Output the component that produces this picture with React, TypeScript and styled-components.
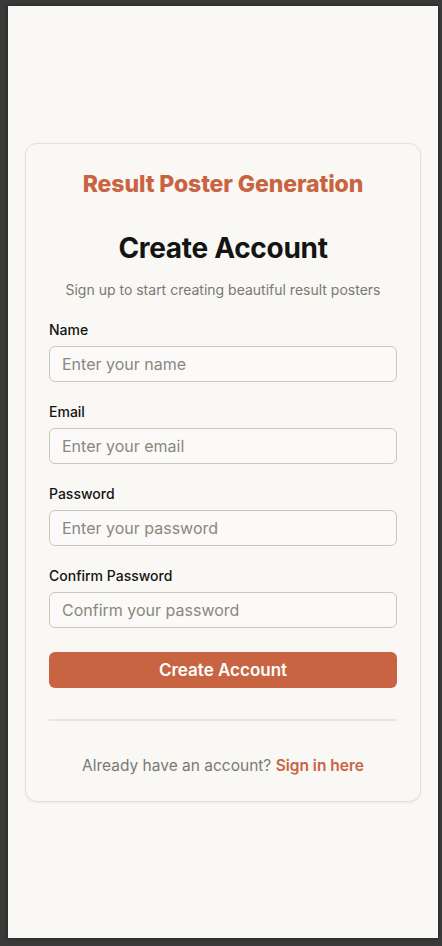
import React from 'react';
import styled, { createGlobalStyle } from 'styled-components';

const GlobalStyle = createGlobalStyle`
    * {
        box-sizing: border-box;
    }

    body {
        margin: 0;
        background: #3a3a3a;
        font-family: Inter, "Noto Sans", sans-serif;
        -webkit-font-smoothing: antialiased;
    }
`;

const fields = [
    { label: 'Name', type: 'text', placeholder: 'Enter your name' },
    { label: 'Email', type: 'email', placeholder: 'Enter your email' },
    { label: 'Password', type: 'password', placeholder: 'Enter your password' },
    { label: 'Confirm Password', type: 'password', placeholder: 'Confirm your password' },
];

export default function App() {
    return (
        <>
            <GlobalStyle />
            <Page>
                <Card>
                    <Brand>Result Poster Generation</Brand>

                    <Heading>Create Account</Heading>

                    <Subtitle>Sign up to start creating beautiful result posters</Subtitle>

                    <Form noValidate autoComplete="off" onSubmit={e => e.preventDefault()}>
                        {fields.map(f => (
                            <Field key={f.label}>
                                <Label>{f.label}</Label>
                                <Input type={f.type} placeholder={f.placeholder} />
                            </Field>
                        ))}

                        <Btn type="submit">Create Account</Btn>
                    </Form>

                    <Divider />

                    <Footer>
                        Already have an account? <FooterLink href="#">Sign in here</FooterLink>
                    </Footer>
                </Card>
            </Page>
        </>
    );
}

const Page = styled.div`
    margin: 6px 4px 8px 8px;
    width: 430px;
    height: 932px;
    background: #f9f8f5;
    box-shadow: 0 0 4px rgba(0, 0, 0, 0.45);
    display: flex;
    align-items: center;
    justify-content: center;
`;

const Card = styled.div`
    width: 396px;
    padding: 26px 23px 23px;
    border: 1px solid #e3e1dc;
    border-radius: 12px;
    background: #f9f8f5;
    box-shadow: 0 1px 3px rgba(0, 0, 0, 0.06);
    display: flex;
    flex-direction: column;
`;

const Brand = styled.h2`
    margin: 0;
    font-size: 23px;
    line-height: 28px;
    font-weight: 800;
    color: #c96442;
    text-align: center;
    letter-spacing: -0.1px;
`;

const Heading = styled.h1`
    margin: 32px 0 0;
    font-size: 28px;
    line-height: 36px;
    font-weight: 700;
    color: #141413;
    text-align: center;
    letter-spacing: -0.3px;
`;

const Subtitle = styled.p`
    margin: 14px 0 20px;
    font-size: 14px;
    line-height: 20px;
    color: #7a7872;
    text-align: center;
`;

const Form = styled.form`
    display: flex;
    flex-direction: column;
    gap: 20px;
`;

const Field = styled.div`
    display: flex;
    flex-direction: column;
    gap: 6px;
`;

const Label = styled.label`
    font-size: 14px;
    line-height: 20px;
    font-weight: 500;
    color: #141413;
`;

const Input = styled.input`
    height: 36px;
    padding: 0 12px;
    border: 1px solid #c9c6be;
    border-radius: 6px;
    background: #fbfaf8;
    font-family: inherit;
    font-size: 16px;
    color: #141413;
    outline: none;

    &::placeholder {
        color: #8a8780;
    }
`;

const Btn = styled.button`
    margin-top: 4px;
    height: 36px;
    border: none;
    border-radius: 6px;
    background: #c96442;
    color: #fff;
    font-family: inherit;
    font-size: 17px;
    font-weight: 600;
    cursor: pointer;
`;

const Divider = styled.hr`
    margin: 31px 0 0;
    border: none;
    border-top: 2px solid #e8e6e1;
`;

const Footer = styled.p`
    margin: 33px 0 0;
    font-size: 15.5px;
    line-height: 24px;
    color: #7a7872;
    text-align: center;
`;

const FooterLink = styled.a`
    color: #c96442;
    font-weight: 600;
    text-decoration: none;
`;
